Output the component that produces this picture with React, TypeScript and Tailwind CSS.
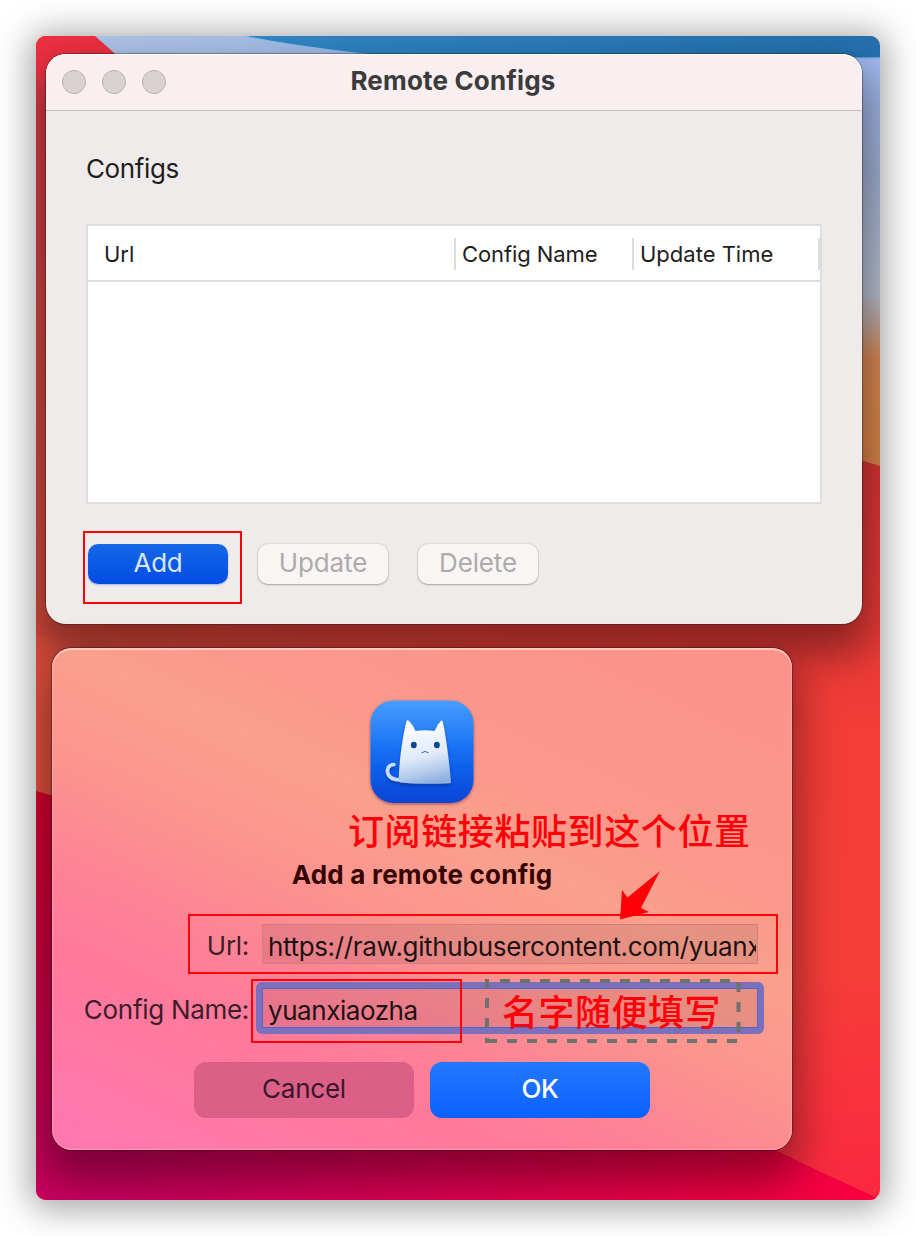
import React from "react";

function Wallpaper() {
  return (
    <svg className="absolute inset-0 h-full w-full" viewBox="36 36 844 1164" preserveAspectRatio="none">
      <defs>
        <linearGradient id="leftRed" x1="0" y1="0" x2="0" y2="1">
          <stop offset="0" stopColor="#f23243" />
          <stop offset="0.15" stopColor="#d83c44" />
          <stop offset="0.6" stopColor="#d04a40" />
          <stop offset="1" stopColor="#da4c3e" />
        </linearGradient>
        <linearGradient id="rightRed" x1="0" y1="0" x2="0" y2="1">
          <stop offset="0" stopColor="#d83434" />
          <stop offset="0.37" stopColor="#d83535" />
          <stop offset="0.6" stopColor="#f33d38" />
          <stop offset="0.8" stopColor="#f53e39" />
          <stop offset="1" stopColor="#fb2740" />
        </linearGradient>
        <linearGradient id="midRed" x1="0" y1="0" x2="1" y2="0">
          <stop offset="0" stopColor="#e04f3e" />
          <stop offset="1" stopColor="#f23c39" stopOpacity="0" />
        </linearGradient>
        <linearGradient id="sky" x1="0" y1="0" x2="1" y2="0">
          <stop offset="0" stopColor="#aec5e8" />
          <stop offset="1" stopColor="#9db4e6" />
        </linearGradient>
        <linearGradient id="ocean" x1="0" y1="0" x2="1" y2="0">
          <stop offset="0" stopColor="#3187c5" />
          <stop offset="1" stopColor="#2470ae" />
        </linearGradient>
        <linearGradient id="dune" x1="0" y1="0" x2="0" y2="1">
          <stop offset="0" stopColor="#a0b8f2" />
          <stop offset="0.3" stopColor="#a0b0d2" />
          <stop offset="0.58" stopColor="#b9bfd0" />
          <stop offset="0.66" stopColor="#c2a59a" />
          <stop offset="0.74" stopColor="#d98755" />
          <stop offset="1" stopColor="#d98547" />
        </linearGradient>
        <linearGradient id="magenta" x1="0" y1="0" x2="0" y2="1">
          <stop offset="0" stopColor="#d4002c" />
          <stop offset="0.4" stopColor="#ca0040" />
          <stop offset="1" stopColor="#c8005f" />
        </linearGradient>
        <linearGradient id="magentaRight" x1="0" y1="0" x2="1" y2="0">
          <stop offset="0.1" stopColor="#f3003c" stopOpacity="0" />
          <stop offset="1" stopColor="#f8003e" />
        </linearGradient>
      </defs>
      <rect x="36" y="36" width="844" height="1164" fill="url(#rightRed)" />
      <rect x="36" y="36" width="844" height="1164" fill="url(#midRed)" />
      <rect x="36" y="36" width="30" height="600" fill="url(#leftRed)" />
      <path d="M36 36H96L140 74H36Z" fill="#ee3042" />
      <path d="M95 36H500V120H190Z" fill="url(#sky)" />
      <path d="M840 50H880V466Q830 450 780 440Z" fill="url(#dune)" />
      <path d="M244 36H880V57.5Q600 62 380 56Q290 45 244 36Z" fill="url(#ocean)" />
      <path d="M244 36Q290 46 390 57" fill="none" stroke="#83bff2" strokeWidth="1.2" />
      <path d="M840 58H880" stroke="#7eaee8" strokeWidth="1" />
      <path d="M36 791Q430 900 650 1085Q740 1136 877 1198V1200H36Z" fill="url(#magenta)" />
      <path d="M36 791Q430 900 650 1085Q740 1136 877 1198V1200H36Z" fill="url(#magentaRight)" />
    </svg>
  );
}

function AppIcon() {
  return (
    <svg className="block h-[112px] w-[112px]" viewBox="366 696 112 112">
      <defs>
        <linearGradient id="tile" x1="0" y1="0" x2="0" y2="1">
          <stop offset="0" stopColor="#489dff" />
          <stop offset="0.5" stopColor="#146ef2" />
          <stop offset="1" stopColor="#0744d8" />
        </linearGradient>
        <linearGradient id="cat" x1="0.35" y1="0" x2="0.55" y2="1">
          <stop offset="0" stopColor="#ffffff" />
          <stop offset="0.55" stopColor="#e2ebfa" />
          <stop offset="0.82" stopColor="#b3cbec" />
          <stop offset="1" stopColor="#8fb0df" />
        </linearGradient>
        <filter id="soft" x="-20%" y="-20%" width="140%" height="140%">
          <feDropShadow dx="0" dy="1.2" stdDeviation="1.4" floodColor="#3a0d20" floodOpacity="0.5" />
        </filter>
        <filter id="catShadow" x="-20%" y="-20%" width="140%" height="140%">
          <feDropShadow dx="0" dy="2.5" stdDeviation="1.8" floodColor="#042a8c" floodOpacity="0.55" />
        </filter>
      </defs>
      <rect x="370.5" y="700.5" width="103" height="102.5" rx="23" fill="url(#tile)" filter="url(#soft)" />
      <g filter="url(#catShadow)">
        <path d="M394 764.500C388.500 764.500 386.800 769 387.700 773C388.800 777.500 393 779.800 401 780" fill="none" stroke="#c9daf3" strokeWidth="3.6" strokeLinecap="round" />
        <path d="M406.500 721Q407.500 719.500 409 721Q413 725 415.500 731Q425 729.500 434.500 731Q437.500 724.500 441 720.800Q442.300 719.800 442.800 721.800C446 737 449 760 451 782Q451 783.200 449.500 783.200C434 784 413 784 400 782.500Q398.500 781 398.800 777C399.500 759 402.500 738 406.500 721Z" fill="url(#cat)" />
      </g>
      <ellipse cx="413.800" cy="745" rx="2.900" ry="3.200" fill="#0b4595" />
      <ellipse cx="436.900" cy="745" rx="2.900" ry="3.200" fill="#0b4595" />
      <path d="M421.500 752.500Q423.500 752.600 425 751.300Q426.500 752.600 428.500 752.500" fill="none" stroke="#235899" strokeWidth="0.9" />
    </svg>
  );
}

function ConfigsWindow() {
  return (
    <section className="absolute left-[10px] top-[18px] flex h-[570px] w-[816px] flex-col rounded-[20px] bg-[#f0ebeb] shadow-[0_0_1px_1px_rgba(0,0,0,0.3),0_22px_40px_8px_rgba(0,0,0,0.4)]">
      <header className="grid h-[57px] shrink-0 grid-cols-[1fr_auto_1fr] items-center rounded-t-[20px] border-b border-[#c5bfc0] bg-[#f9eff0] px-4 shadow-[inset_0_1px_0_#ffffff]">
        <div className="flex gap-4">
          <span className="size-6 rounded-full border border-[#b9b0b1] bg-[#dad1d2]" />
          <span className="size-6 rounded-full border border-[#b9b0b1] bg-[#dad1d2]" />
          <span className="size-6 rounded-full border border-[#b9b0b1] bg-[#dad1d2]" />
        </div>
        <h1 className="relative -left-px -top-px whitespace-nowrap text-[26px] font-bold leading-8 tracking-[0.17px] text-[#3b3b3b]">Remote Configs</h1>
        <span />
      </header>
      <div className="flex flex-col px-10 pt-[42px]">
        <h2 className="h-8 text-[26px] leading-8 tracking-[-0.38px] text-[#1f1d1d]">Configs</h2>
        <div className="mt-[39px] h-[280px] w-[736px] border-2 border-[#dcdddd] bg-white">
          <div className="flex h-[56px] items-center border-b-2 border-[#dcdddd] pt-[2px] text-[22px] leading-[32px] text-[#1d1d1d]">
            <div className="h-8 w-[368px] border-r-2 border-[#dcdddd] pl-4">Url</div>
            <div className="h-8 w-[178px] whitespace-nowrap border-r-2 border-[#dcdddd] pl-[6px] tracking-[-0.08px]">Config Name</div>
            <div className="h-8 flex-1 whitespace-nowrap border-r-2 border-[#dcdddd] pl-[6px]">Update Time</div>
          </div>
        </div>
        <div className="mt-10 flex pl-[2px] text-[26px] leading-[38px]">
          <button className="h-10 w-[140px] rounded-[10px] bg-linear-to-b from-[#1766e6] to-[#044be4] pb-[2px] tracking-[-0.3px] text-[#d9e7fc] shadow-[0_1px_2px_rgba(30,80,220,0.35)]">Add</button>
          <button className="ml-[30px] h-10 w-[130px] rounded-[10px] bg-[#f8f5f4] pb-[2px] tracking-[-0.15px] text-[#adabab] shadow-[0_0_1px_1px_rgba(0,0,0,0.06),0_1px_2px_rgba(0,0,0,0.25)]">Update</button>
          <button className="ml-[30px] h-10 w-[120px] rounded-[10px] bg-[#f8f5f4] pb-[2px] tracking-[-0.15px] text-[#adabab] shadow-[0_0_1px_1px_rgba(0,0,0,0.06),0_1px_2px_rgba(0,0,0,0.25)]">Delete</button>
        </div>
      </div>
    </section>
  );
}

function AddDialog() {
  return (
    <section className="absolute left-4 top-[612px] flex h-[502px] w-[740px] flex-col items-center rounded-[20px] bg-[linear-gradient(205deg,#fb928a_0%,#fa998b_32%,#faa08c_40%,#fb968e_52%,#fd8495_65%,#fe7a9b_75%,#fe77b0_100%)] shadow-[inset_0_2px_1px_rgba(255,215,205,0.75),inset_0_0_1px_1px_rgba(255,190,190,0.45),0_0_1px_1px_rgba(0,0,0,0.35),0_22px_40px_8px_rgba(0,0,0,0.38)]">
      <div className="mt-12 h-[112px]"><AppIcon /></div>
      <h2 className="mt-[51px] h-8 whitespace-nowrap text-[26px] font-bold leading-8 tracking-[0.22px] text-[#350303]">Add a remote config</h2>
      <div className="mt-[33px] grid w-full grid-cols-[197px_496px] gap-x-[13px] gap-y-6 text-[26px] leading-[40px] text-[#3c1d29]">
        <label className="h-10 whitespace-nowrap pt-[2px] text-right tracking-[-0.3px]">Url:</label>
        <div className="h-10 border border-[#d47d79] bg-[#5b3c3c]/12 pl-[5px] pr-px text-[#1d1214]">
          <div className="h-[38px] overflow-hidden whitespace-nowrap pt-[3px] leading-[38px] tracking-[-0.36px]">https://raw.githubusercontent.com/yuanx</div>
        </div>
        <label className="h-10 whitespace-nowrap pt-[2px] text-right tracking-[-0.3px]">Config Name:</label>
        <div className="-m-[6px] h-[52px] rounded-[6px] border-[6px] border-[#7971bd]">
          <div className="h-10 border border-[#5a62c4] bg-[#5b3c3c]/12 pl-[5px] pt-[3px] leading-[38px] tracking-[-0.45px] text-[#1d1214]">yuanxiaozha</div>
        </div>
      </div>
      <div className="mt-[34px] flex gap-4 text-[26px] leading-[54px]">
        <button className="h-14 w-[220px] rounded-xl bg-[#dc5f88] pb-[2px] tracking-[-0.25px] text-[#37182a]">Cancel</button>
        <button className="h-14 w-[220px] rounded-xl bg-linear-to-b from-[#2378ff] to-[#0a61ff] pb-[2px] font-medium tracking-[-0.4px] text-white">OK</button>
      </div>
    </section>
  );
}

function Annotations() {
  return (
    <div className="pointer-events-none absolute inset-0 font-['Noto_Sans_CJK_SC',sans-serif] text-[36px] font-medium leading-[40px] text-[#ff0008]">
      <div className="absolute left-[47px] top-[495px] h-[73px] w-[159px] border-2 border-[#ff0008]" />
      <div className="absolute left-[152px] top-[878px] h-[60px] w-[590px] border-2 border-[#ff0008]" />
      <div className="absolute left-[215px] top-[943px] h-[64px] w-[211px] border-2 border-[#ff0008]" />
      <p className="absolute left-[312px] top-[773px] whitespace-nowrap tracking-[0.6px]">订阅链接粘贴到这个位置</p>
      <p className="absolute left-[466px] top-[954px] whitespace-nowrap tracking-[0.5px]">名字随便填写</p>
      <svg className="absolute inset-0 h-full w-full" viewBox="36 36 844 1164">
        <path d="M620 919.500L622 890L627.500 897.500L660 871L641 908L649 912Z" fill="#ff0008" />
        <path d="M487 988V979" stroke="#6e716e" strokeWidth="4" />
        <path d="M500 981H740" stroke="#6e716e" strokeWidth="4" strokeDasharray="10 10" />
        <path d="M487 998V1043" stroke="#6e716e" strokeWidth="4" strokeDasharray="10 10" />
        <path d="M487 1041H740" stroke="#6e716e" strokeWidth="4" strokeDasharray="10 10" />
        <path d="M738.500 982V1034" stroke="#6e716e" strokeWidth="4" strokeDasharray="10 10" />
      </svg>
    </div>
  );
}

export default function App() {
  return (
    <main className="h-[1236px] w-[916px] overflow-hidden bg-white p-9 font-[Inter,sans-serif]">
      <div className="relative h-[1164px] w-[844px] rounded-[10px] shadow-[0_3px_34px_6px_rgba(0,0,0,0.36)]">
        <div className="absolute inset-0 overflow-hidden rounded-[10px]">
          <Wallpaper />
          <ConfigsWindow />
          <AddDialog />
          <Annotations />
        </div>
      </div>
    </main>
  );
}
